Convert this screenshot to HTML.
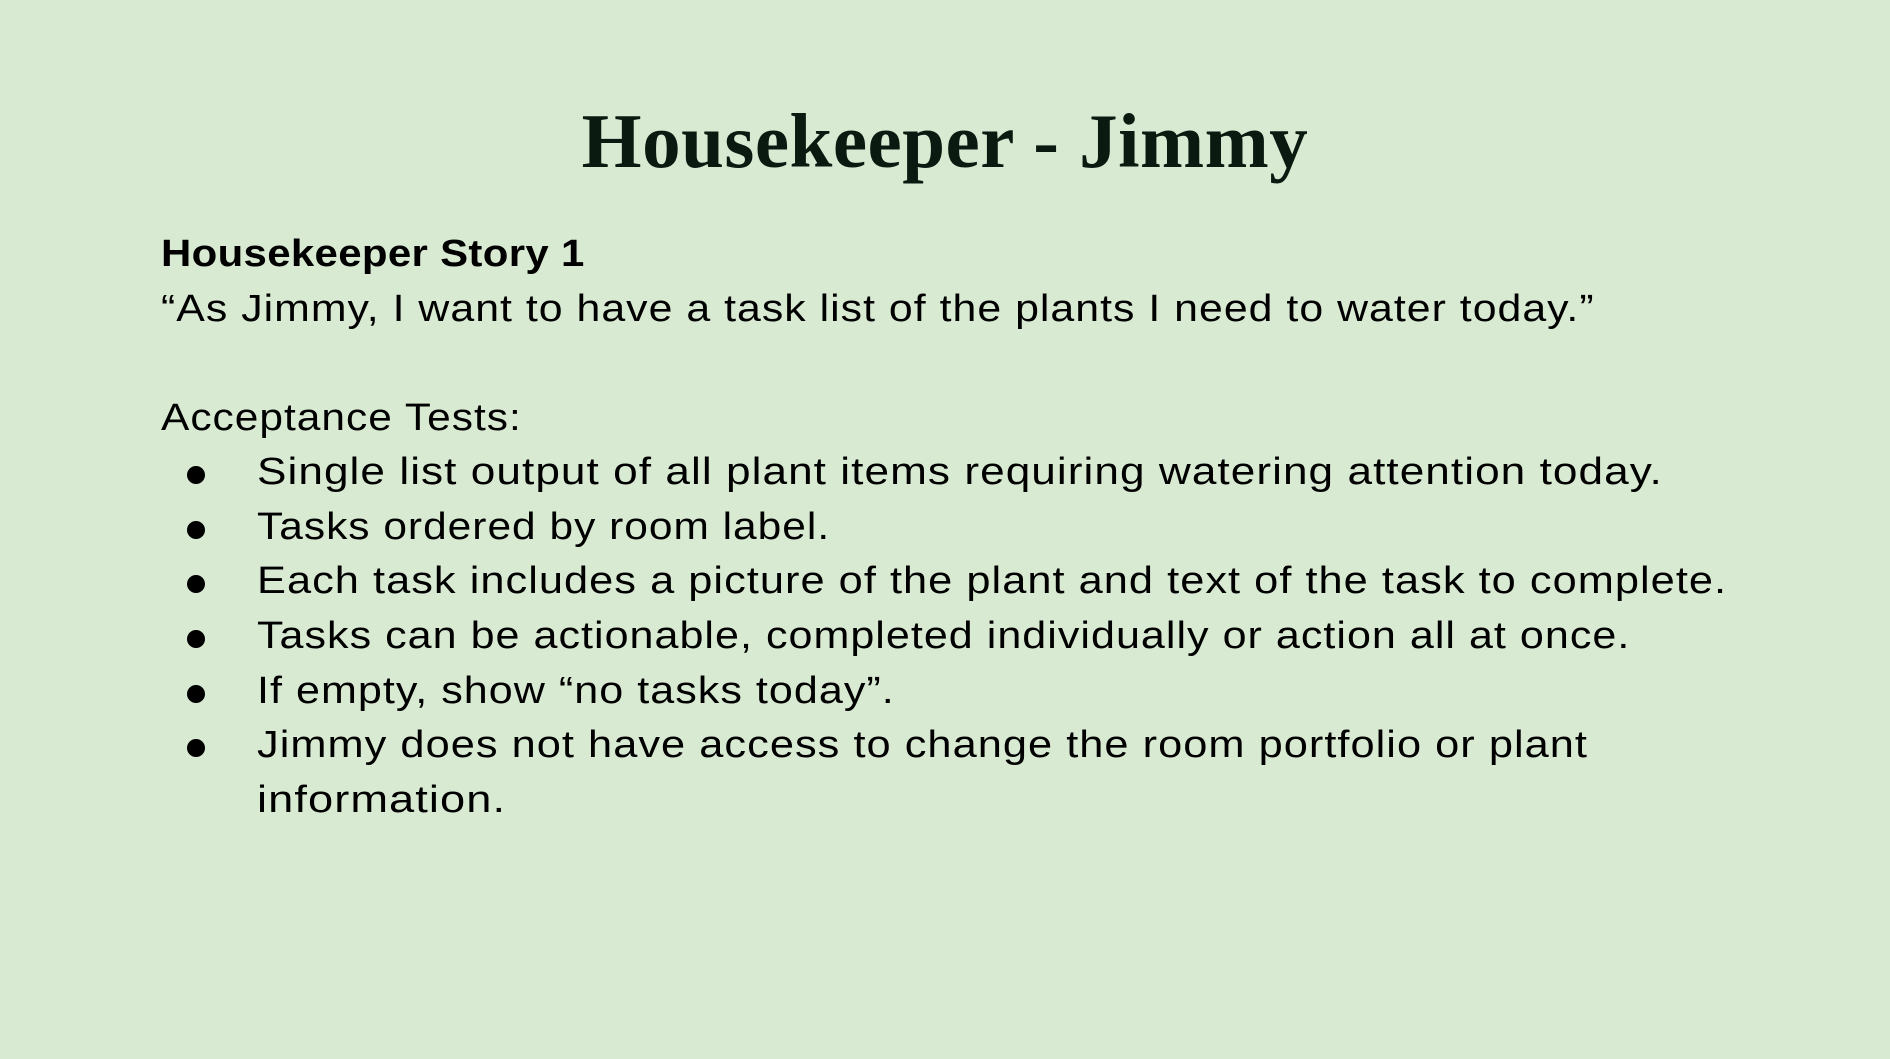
<!DOCTYPE html>
<html><head><meta charset="utf-8"><style>
html,body{margin:0;padding:0}
body{width:1890px;height:1059px;background:#d9ead3;position:relative;overflow:hidden;font-family:"Liberation Sans",sans-serif;color:#000}
h1{position:absolute;left:0;width:1890px;top:96px;margin:0;text-align:center;font-family:"Liberation Serif",serif;font-weight:bold;font-size:77px;line-height:90px;color:#0b1a10;letter-spacing:0.5px}
.t{position:absolute;left:161px;font-size:38px;letter-spacing:0.9px;white-space:nowrap;transform:scaleX(1.162);transform-origin:0 0}
.b{position:absolute;left:187px;width:18px;height:18px;border-radius:50%;background:#000}
</style></head><body>
<h1>Housekeeper - Jimmy</h1>
<div class="t" style="top:233px;font-weight:bold;letter-spacing:0.3px;transform:scaleX(1.104)">Housekeeper Story 1</div>
<div class="t" style="top:288px;transform:scaleX(1.127)">“As Jimmy, I want to have a task list of the plants I need to water today.”</div>
<div class="t" style="top:397px;transform:scaleX(1.117)">Acceptance Tests:</div>
<div class="b" style="top:466px"></div><div class="t" style="top:451px;left:257px">Single list output of all plant items requiring watering attention today.</div>
<div class="b" style="top:521px"></div><div class="t" style="top:506px;left:257px;transform:scaleX(1.117)">Tasks ordered by room label.</div>
<div class="b" style="top:575px"></div><div class="t" style="top:560px;left:257px;transform:scaleX(1.141)">Each task includes a picture of the plant and text of the task to complete.</div>
<div class="b" style="top:630px"></div><div class="t" style="top:615px;left:257px;transform:scaleX(1.133)">Tasks can be actionable, completed individually or action all at once.</div>
<div class="b" style="top:685px"></div><div class="t" style="top:670px;left:257px;transform:scaleX(1.134)">If empty, show “no tasks today”.</div>
<div class="b" style="top:739px"></div><div class="t" style="top:724px;left:257px;transform:scaleX(1.141)">Jimmy does not have access to change the room portfolio or plant</div>
<div class="t" style="top:779px;left:257px;transform:scaleX(1.19)">information.</div>
</body></html>
